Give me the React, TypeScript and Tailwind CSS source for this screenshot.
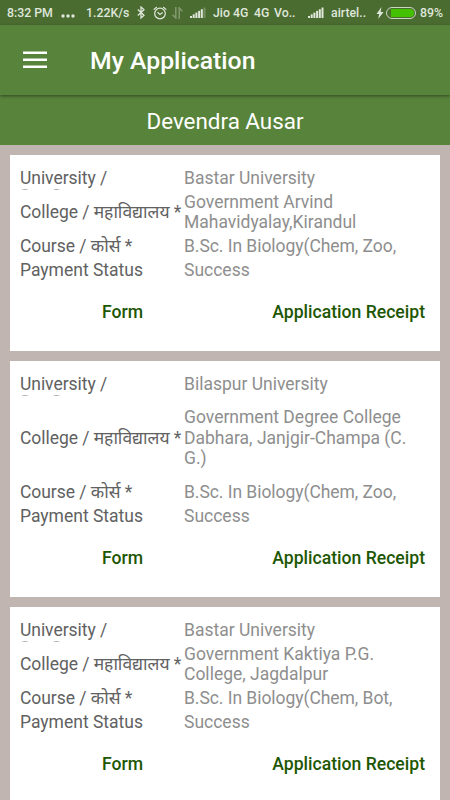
interface Application {
  university: string;
  college: string[];
  course: string;
  status: string;
  collegeRow: string;
}

const APPLICATIONS: Application[] = [
  {
    university: 'Bastar University',
    college: ['Government Arvind', 'Mahavidyalay,Kirandul'],
    course: 'B.Sc. In Biology(Chem, Zoo,',
    status: 'Success',
    collegeRow: 'h-11',
  },
  {
    university: 'Bilaspur University',
    college: ['Government Degree College', 'Dabhara, Janjgir-Champa (C.', 'G.)'],
    course: 'B.Sc. In Biology(Chem, Zoo,',
    status: 'Success',
    collegeRow: 'h-21',
  },
  {
    university: 'Bastar University',
    college: ['Government Kaktiya P.G.', 'College, Jagdalpur'],
    course: 'B.Sc. In Biology(Chem, Bot,',
    status: 'Success',
    collegeRow: 'h-11',
  },
];

function SignalIcon({ bars, className }: { bars: number; className: string }) {
  return (
    <svg viewBox="0 0 16 11" className={className} fill="#dfe6da">
      {[0, 1, 2, 3, 4, 5].map((i) => (
        <rect key={i} x={i * 2.7} y={9 - i * 1.7} width="2" height={2 + i * 1.7} opacity={i < bars ? 1 : 0.3} />
      ))}
    </svg>
  );
}

function StatusBar() {
  return (
    <div className="flex h-[25px] items-center bg-[#4b6c31] pl-[7px] text-[12.3px] leading-none font-medium whitespace-nowrap text-[#dfe6da]">
      <span className="w-[54px] pt-px">8:32 PM</span>
      <svg viewBox="0 0 14 4" className="mt-1.5 h-1 w-3.5 shrink-0" fill="#dfe6da">
        <circle cx="2" cy="2" r="1.7" />
        <circle cx="7" cy="2" r="1.7" />
        <circle cx="12" cy="2" r="1.7" />
      </svg>
      <span className="ml-[11px] w-[51px] pt-px">1.22K/s</span>
      <svg viewBox="0 0 8 13" className="h-[13px] w-2 shrink-0" fill="none" stroke="#dfe6da" strokeWidth="1.3">
        <path d="M.8 3.6 7 9.3 4 12V1l3 2.7L.8 9.4" />
      </svg>
      {/* Alarm */}
      <svg viewBox="0 0 14 14" className="ml-2 h-3.5 w-3.5 shrink-0" fill="none" stroke="#dfe6da" strokeWidth="1.2">
        <circle cx="7" cy="7.5" r="5.3" />
        <path d="M.7 3.6 3.8 1M13.3 3.6 10.2 1M4.5 6.2 7 8.4l2.7-2" />
      </svg>
      {/* Data arrows */}
      <svg viewBox="0 0 11 12" className="ml-[5px] h-3 w-[11px] shrink-0" fill="none" stroke="#84996f" strokeWidth="1.5">
        <path d="M3.8 0v11L.5 7.7M7.2 12V1l3.3 3.3" />
      </svg>
      <SignalIcon bars={5} className="ml-[7px] h-[11px] w-4 shrink-0" />
      <span className="ml-[7px] w-[37px] pt-px">Jio 4G</span>
      <span className="ml-[4px] w-[18px] pt-px">4G</span>
      <span className="ml-[2px] w-[34px] pt-px">Vo..</span>
      <SignalIcon bars={6} className="h-[11px] w-4 shrink-0" />
      <span className="ml-[7px] w-[45px] pt-px">airtel..</span>
      <svg viewBox="0 0 8 12" className="h-3 w-2 shrink-0" fill="#dfe6da">
        <path d="M5.5 0 .5 7h2.7L2.2 12 7.5 5H4.6z" />
      </svg>
      <div className="ml-[2px] h-[12px] w-[30px] shrink-0 rounded-full border border-[#c9d6c0] p-px">
        <div className="ml-[3px] h-full rounded-r-full rounded-l-[2px] bg-[#43c000]" />
      </div>
      <span className="ml-1 pt-px">89%</span>
    </div>
  );
}

function ApplicationCard({ app }: { app: Application }) {
  return (
    <div className="bg-white px-[10px] pt-[11px] text-[17.5px] text-[#616161]">
      <div className="flex h-6">
        {/* The label is two lines long, only the tips of the second one fit */}
        <div className="h-6 w-[164px] shrink-0 overflow-hidden pt-[2px] leading-5">
          <div className="h-5 tracking-[-0.05px]">University /</div>
          <div className="leading-[23px] text-[#b0b0b0]">विश्वविद्यालय *</div>
        </div>
        <div className="leading-6 text-[#8e8e8e]">{app.university}</div>
      </div>
      <div className={`flex items-center ${app.collegeRow}`}>
        <div className="w-[164px] shrink-0 tracking-[-0.05px] whitespace-nowrap">College / महाविद्यालय *</div>
        <div className="leading-[20.4px] whitespace-nowrap text-[#8e8e8e]">
          {app.college.map((line) => (
            <div key={line}>{line}</div>
          ))}
        </div>
      </div>
      <div className="flex h-6 items-center">
        <div className="w-[164px] shrink-0 tracking-[-0.05px]">Course / कोर्स *</div>
        <div className="tracking-[-0.05px] whitespace-nowrap text-[#8e8e8e]">{app.course}</div>
      </div>
      <div className="flex h-6 items-center">
        <div className="w-[164px] shrink-0">Payment Status</div>
        <div className="text-[#8e8e8e]">{app.status}</div>
      </div>
      <div className="flex h-[69px] justify-between pt-[18px] pr-[5px] pl-[82px] text-[17.6px] leading-6 font-medium text-[#1e5704]">
        <button className="h-6">Form</button>
        <button className="h-6">Application Receipt</button>
      </div>
    </div>
  );
}

export default function App() {
  return (
    <div className="h-[800px] w-[450px] overflow-hidden bg-[#c1b5b1] font-[Roboto,'Noto_Sans',sans-serif]">
      <StatusBar />
      <header className="relative flex h-[70px] items-center bg-[#58833a] pl-[23px] shadow-[0_1px_3px_rgba(0,0,0,0.45)]">
        <svg viewBox="0 0 24 18" className="h-[18px] w-6" fill="white">
          <rect y="0.5" width="24" height="2.5" />
          <rect y="7.5" width="24" height="2.5" />
          <rect y="14.5" width="24" height="2.5" />
        </svg>
        <h1 className="ml-[43px] pt-px text-[24.8px] font-medium text-white">My Application</h1>
      </header>
      <div className="h-[50px] bg-[#58833a] text-center text-[22.4px] leading-[53px] text-white">Devendra Ausar</div>
      <main className="flex flex-col gap-[10px] p-[10px]">
        {APPLICATIONS.map((app, i) => (
          <ApplicationCard key={i} app={app} />
        ))}
      </main>
    </div>
  );
}
